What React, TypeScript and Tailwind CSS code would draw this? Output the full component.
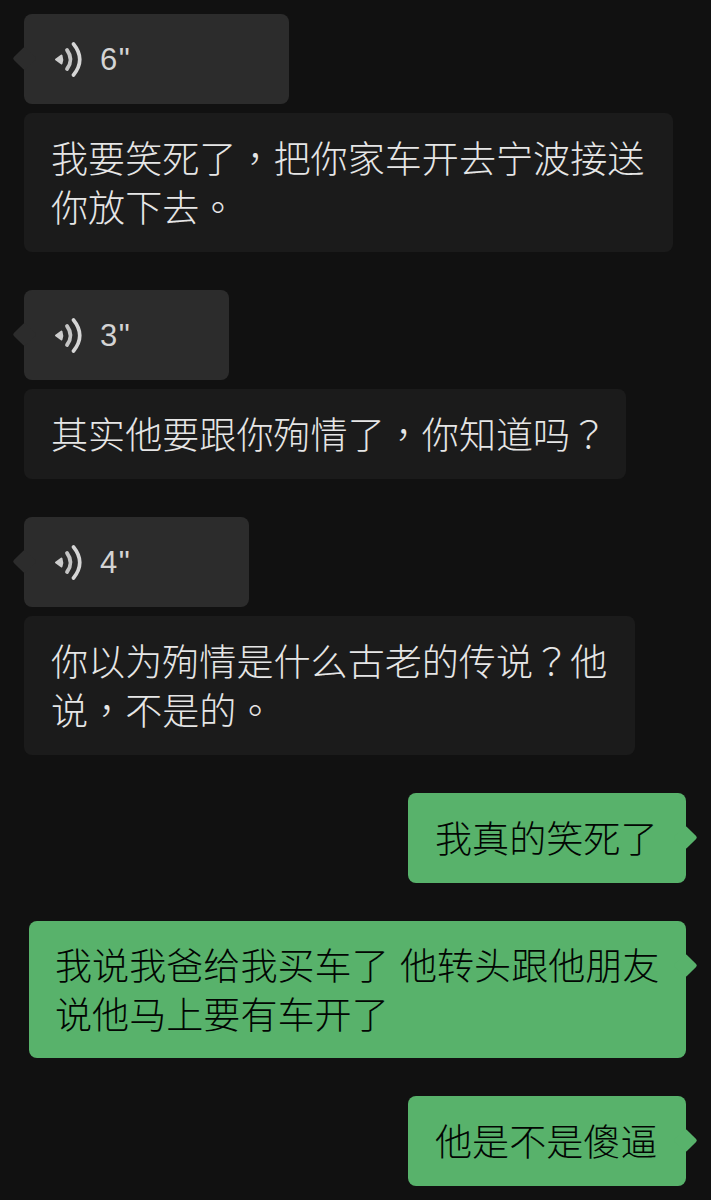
import React from 'react';

const font = { fontFamily: '"Noto Sans CJK SC", "Noto Sans", sans-serif' };

// iOS draws CJK punctuation centred in its box, the TC cut of Noto does the same
function P({ children }: { children: React.ReactNode }) {
  return <span style={{ fontFamily: '"Noto Sans CJK TC", sans-serif' }}>{children}</span>;
}

function VoiceIcon() {
  return (
    <svg width="28" height="37" viewBox="0 0 28 37" fill="none" className="shrink-0">
      <path d="M2 18.5 L7.5 14.5 Q9 18.5 7.5 22.5 Z" fill="#cdcdcd" stroke="#cdcdcd" strokeWidth="2" strokeLinejoin="round" />
      <path d="M13 9 Q20 18.5 13 28" stroke="#c4c4c4" strokeWidth="3.8" strokeLinecap="round" />
      <path d="M19.5 3 Q32 18.5 19.5 34" stroke="#d6d6d6" strokeWidth="3.6" strokeLinecap="round" />
    </svg>
  );
}

function VoiceBubble({ seconds, width }: { seconds: string; width: string }) {
  return (
    <div className={`relative flex h-[90px] items-center rounded-lg bg-[#2c2c2c] pl-[30px] ${width}`}>
      <div className="absolute top-[35.5px] -left-[8px] h-[17px] w-[17px] rotate-45 rounded-[2px] bg-[#2c2c2c]" />
      <VoiceIcon />
      <span className="ml-[18px] text-[31px] leading-none tracking-[1.5px] text-[#d4d4d4]" style={{ fontFamily: '"Liberation Sans", sans-serif' }}>
        {seconds}
      </span>
    </div>
  );
}

function TextBubble({ children, width }: { children: React.ReactNode; width: string }) {
  return (
    <div className={`mt-[9px] rounded-lg bg-[#1b1b1b] px-[27px] py-[20.5px] text-[37.1px] leading-[49px] font-light whitespace-nowrap text-[#e6e6e6] ${width}`}>
      <div className="-translate-y-px">{children}</div>
    </div>
  );
}

function GreenBubble({ children, width, className = '' }: { children: React.ReactNode; width: string; className?: string }) {
  return (
    <div className={`relative self-end rounded-lg bg-[#58b26b] text-[37.1px] leading-[49px] font-light whitespace-nowrap text-[#020603] ${width} ${className}`}>
      <div className="absolute top-[35.5px] -right-[8px] h-[17px] w-[17px] rotate-45 rounded-[2px] bg-[#58b26b]" />
      <div className="relative -translate-y-px">{children}</div>
    </div>
  );
}

export default function App() {
  return (
    <div className="h-[1200px] w-[711px] overflow-hidden bg-[#111111]" style={font}>
      <div className="flex flex-col pt-[14px] pr-[25px] pl-[24px]">
        <div className="flex flex-col items-start">
          <VoiceBubble seconds={'6"'} width="w-[265px]" />
          <TextBubble width="w-[649px]">
            我要笑死了<P>，</P>把你家车开去宁波接送
            <br />
            你放下去<P>。</P>
          </TextBubble>
        </div>

        <div className="mt-[38px] flex flex-col items-start">
          <VoiceBubble seconds={'3"'} width="w-[205px]" />
          <TextBubble width="w-[602px]">
            其实他要跟你殉情了<P>，</P>你知道吗<P>？</P>
          </TextBubble>
        </div>

        <div className="mt-[38px] flex flex-col items-start">
          <VoiceBubble seconds={'4"'} width="w-[225px]" />
          <TextBubble width="w-[611px]">
            你以为殉情是什么古老的传说<P>？</P>他
            <br />
            说<P>，</P>不是的<P>。</P>
          </TextBubble>
        </div>

        <GreenBubble width="w-[278px]" className="mt-[38px] px-[27px] py-[20.5px]">我真的笑死了</GreenBubble>
        <GreenBubble width="w-[657px]" className="mt-[38px] px-[26px] py-[19.5px] [word-spacing:3px]">
          我说我爸给我买车了 他转头跟他朋友
          <br />
          说他马上要有车开了
        </GreenBubble>
        <GreenBubble width="w-[278px]" className="mt-[38px] px-[27px] py-[20.5px]">他是不是傻逼</GreenBubble>
      </div>
    </div>
  );
}
